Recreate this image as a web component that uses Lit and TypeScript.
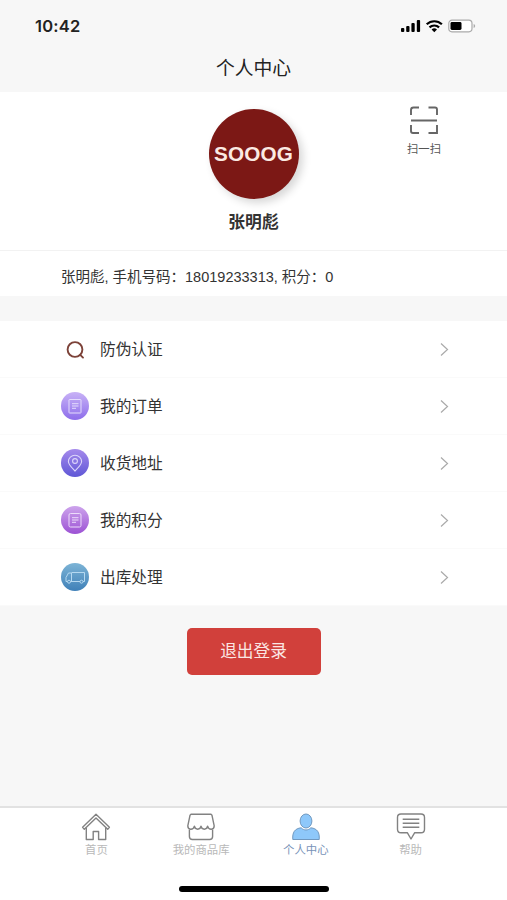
import { LitElement, html, svg, css } from "lit";
import { customElement, property } from "lit/decorators.js";

const docLines = svg`<path d="M11 11.7h6.5M11 14h6.5M11 16.3h4"/>`;

const rowIcons: Record<string, unknown> = {
  search: svg`<g fill="none" stroke="#7c4238" stroke-width="1.9" stroke-linecap="round">
    <circle cx="14" cy="14.5" r="7.4"/><path d="M19.2 19.8l2.800 2.800"/></g>`,
  order: svg`
    <defs><linearGradient id="g" x1="0" y1="0" x2="0" y2="1"><stop offset="0" stop-color="#c8b2f6"/><stop offset="1" stop-color="#8d6deb"/></linearGradient></defs>
    <circle cx="14" cy="14" r="14" fill="url(#g)"/>
    <g fill="none" stroke="#e4dcfc" stroke-width="1"><rect x="8" y="7.500" width="12" height="13.500" rx="0.500"/>${docLines}</g>`,
  address: svg`
    <defs><linearGradient id="g" x1="0" y1="0" x2="0" y2="1"><stop offset="0" stop-color="#a58aec"/><stop offset="1" stop-color="#5f57d6"/></linearGradient></defs>
    <circle cx="14" cy="14" r="14" fill="url(#g)"/>
    <g fill="none" stroke="#ddd6fa" stroke-width="1.1"><path d="M14 22c-3-3.200-6.600-6.300-6.600-9.500a6.600 6.200 0 0 1 13.200 0c0 3.200-3.600 6.300-6.600 9.500z"/><circle cx="14" cy="12" r="2.400"/></g>`,
  points: svg`
    <defs><linearGradient id="g" x1="0" y1="0" x2="0" y2="1"><stop offset="0" stop-color="#cda4ec"/><stop offset="1" stop-color="#9c52d4"/></linearGradient></defs>
    <circle cx="14" cy="14" r="14" fill="url(#g)"/>
    <g fill="none" stroke="#ecdcfa" stroke-width="1"><rect x="8" y="7.500" width="12" height="13.500" rx="1.500"/>${docLines}</g>`,
  truck: svg`
    <defs><linearGradient id="g" x1="0" y1="0" x2="0" y2="1"><stop offset="0" stop-color="#7db4d6"/><stop offset="1" stop-color="#3f80b8"/></linearGradient></defs>
    <circle cx="14" cy="14" r="14" fill="url(#g)"/>
    <g fill="none" stroke="#b5d8f0" stroke-width="1"><path d="M6.500 18.500H5v-4l2.500-4.500h3v8.500h-1M10.500 9.500h13v9h-1.500M19 18.500h-9"/><circle cx="8" cy="18.700" r="1.500"/><circle cx="20.500" cy="18.700" r="1.500"/></g>`,
};

const tabIcons: Record<string, unknown> = {
  home: svg`<path d="M1.600 15.300L15 2.300l13.400 13-1.700 1.900L15 5.900 3.300 17.200z"/><path d="M5.300 15.800v11.700h6.900v-8h5.400v8h7.100V15.800"/>`,
  shop: svg`<path d="M5 2.300h20l1 1 2.200 10.500c0 4.200-5.300 4.700-6.600.4-.8 4-5.800 4-6.600 0-.8 4-5.800 4-6.600 0-1.300 4.300-6.600 3.800-6.600-.4L4 3.300z"/><path d="M3.400 17.400v7.100q0 3 3 3h17.200q3 0 3-3v-7.100"/>`,
  user: svg`<path d="M1.800 27.500c-.6-7 1.900-11 8.400-11.700 2.500 2.900 7.100 2.900 9.600 0 6.500.7 9 4.700 8.400 11.700z"/><ellipse cx="15" cy="9" rx="5.900" ry="7"/>`,
  help: svg`<path d="M5 2h20q3.500 0 3.500 3.500v11.700q0 3.500-3.500 3.500h-6.300L15 27l-3.700-6.300H5q-3.500 0-3.500-3.500V5.500Q1.500 2 5 2z"/><path d="M6.700 7.300h16.600M6.700 11.300h16.600M6.700 15.300h16.600"/>`,
};

@customElement("menu-row")
class MenuRow extends LitElement {
  @property() icon = "";
  @property() label = "";

  static styles = css`
    :host { display: flex; align-items: center; box-sizing: border-box; height: 57px; padding: 0 58px 0 61px; border-bottom: 1px solid #fafafa; }
    .icon { width: 28px; height: 28px; margin-right: 11px; }
    .label { flex: 1; font-size: 15.700px; color: #333; padding-bottom: 2px; }
    .arrow { width: 9px; height: 15px; fill: none; stroke: #aaa; stroke-width: 1.200; }
  `;

  render() {
    return html`
      <svg class="icon" viewBox="0 0 28 28">${rowIcons[this.icon]}</svg>
      <span class="label">${this.label}</span>
      <svg class="arrow" viewBox="0 0 9 15"><path d="M1 1.500l6.500 6L1 13.500"/></svg>
    `;
  }
}

@customElement("tab-item")
class TabItem extends LitElement {
  @property() icon = "";
  @property() label = "";
  @property({ type: Boolean, reflect: true }) active = false;

  static styles = css`
    :host { display: flex; flex-direction: column; align-items: center; width: 104.700px; color: #b9b9b9; }
    .icon { width: 30px; height: 30px; fill: none; stroke: #828282; stroke-width: 1.400; stroke-linejoin: round; }
    .label { font-size: 11.400px; line-height: 16px; white-space: nowrap; }
    :host([active]) { color: #7792b8; }
    :host([active]) .icon { fill: #8ec8fa; stroke: #7199c0; stroke-width: 1; }
  `;

  render() {
    return html`
      <svg class="icon" viewBox="0 0 30 30">${tabIcons[this.icon]}</svg>
      <span class="label">${this.label}</span>
    `;
  }
}

@customElement("app-root")
class AppRoot extends LitElement {
  static styles = css`
    :host { display: flex; flex-direction: column; height: 900px; background: #f7f7f7; color: #333; overflow: hidden; font-family: "Liberation Sans", "Noto Sans CJK SC", sans-serif; }
    .status { display: flex; align-items: center; justify-content: space-between; height: 52px; padding: 0 31px 0 35px; }
    .time { font: 600 16.500px Inter, sans-serif; color: #222; letter-spacing: 0.200px; }
    .signals { width: 75px; height: 14px; }
    .title { box-sizing: border-box; height: 40px; display: flex; align-items: center; justify-content: center; padding-bottom: 7px; font-size: 18.800px; line-height: 30px; color: #222; }
    .profile { position: relative; box-sizing: border-box; height: 159px; background: #fff; border-bottom: 1px solid #f2f2f2; display: flex; flex-direction: column; align-items: center; padding-top: 17px; }
    .avatar { width: 90px; height: 90px; border-radius: 50%; background: #7c1815; color: #fbeae3; display: flex; align-items: center; justify-content: center; font: 700 20.700px "Liberation Sans", sans-serif; letter-spacing: 0.200px; box-shadow: 4px 4px 9px rgba(0, 0, 0, 0.160); }
    .name { margin-top: 12px; font-size: 16.800px; line-height: 24px; font-weight: 700; }
    .scan { position: absolute; top: 13px; right: 62px; width: 42px; display: flex; flex-direction: column; align-items: center; font-size: 11.300px; line-height: 16px; color: #555; }
    .scan-icon { width: 30px; height: 30px; margin-bottom: 6px; fill: none; stroke: #666; stroke-width: 1.900; }
    .info { height: 45px; box-sizing: border-box; background: #fff; padding: 3px 0 0 61px; display: flex; align-items: center; font-size: 14.500px; white-space: pre; }
    .menu { margin-top: 25px; background: #fff; height: 284px; }
    .logout { align-self: center; margin-top: 22.500px; width: 134px; height: 47px; border: 0; padding: 0 0 3px; border-radius: 5px; background: #d1403b; color: #fbe6e3; font: 16.700px "Liberation Sans", "Noto Sans CJK SC", sans-serif; }
    .tabs { margin-top: auto; box-sizing: border-box; height: 94px; border-top: 2px solid #e2e2e2; background: #fff; display: flex; flex-direction: column; align-items: center; padding-top: 4px; }
    .tab-list { display: flex; height: 74px; }
    .home-bar { width: 150px; height: 6px; border-radius: 3px; background: #000; }
  `;

  render() {
    return html`
      <div class="status">
        <span class="time">10:42</span>
        <svg class="signals" viewBox="0 0 75 14">
          <rect x="0" y="9" width="3.300" height="4" rx="1"/><rect x="5.200" y="7" width="3.300" height="6" rx="1"/>
          <rect x="10.400" y="4" width="3.300" height="9" rx="1"/><rect x="15.800" y="1" width="3.300" height="12" rx="1"/>
          <g fill="none" stroke="#000" stroke-width="2.200"><path d="M25.700 5.300a11 11 0 0 1 15.200 0"/><path d="M28.500 8.400a7 7 0 0 1 9.600 0"/></g>
          <path d="M30.600 10.500a4 4 0 0 1 5.400 0L33.300 13.200z"/>
          <rect x="47.800" y="1.200" width="23.200" height="11.600" rx="3.200" fill="#fff" stroke="#aaa" stroke-width="1.200"/>
          <rect x="49.500" y="3" width="11" height="8" rx="1.400"/><path d="M72.600 5v4q1.600-.6 1.600-2t-1.600-2z" fill="#aaa"/>
        </svg>
      </div>
      <div class="title">个人中心</div>
      <section class="profile">
        <div class="avatar">SOOOG</div>
        <div class="name">张明彪</div>
        <div class="scan">
          <svg class="scan-icon" viewBox="0 0 30 30"><path d="M2 10V5q0-2.500 2.500-2.500H10M19.500 2.500H26q2 0 2 2V10M2 20v6q0 2 2 2h6M19.500 28H28v-8M2 15.500h26"/></svg>
          <span>扫一扫</span>
        </div>
      </section>
      <div class="info">张明彪, 手机号码：18019233313, 积分：0</div>
      <nav class="menu">
        <menu-row icon="search" label="防伪认证"></menu-row>
        <menu-row icon="order" label="我的订单"></menu-row>
        <menu-row icon="address" label="收货地址"></menu-row>
        <menu-row icon="points" label="我的积分"></menu-row>
        <menu-row icon="truck" label="出库处理"></menu-row>
      </nav>
      <button class="logout">退出登录</button>
      <footer class="tabs">
        <div class="tab-list">
          <tab-item icon="home" label="首页"></tab-item>
          <tab-item icon="shop" label="我的商品库"></tab-item>
          <tab-item icon="user" label="个人中心" active></tab-item>
          <tab-item icon="help" label="帮助"></tab-item>
        </div>
        <div class="home-bar"></div>
      </footer>
    `;
  }
}
